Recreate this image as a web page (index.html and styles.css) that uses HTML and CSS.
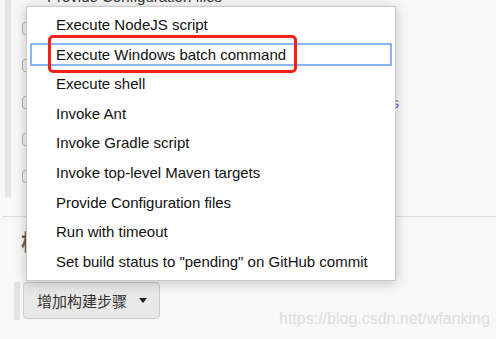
FILE: index.html
```html
<!DOCTYPE html>
<html>
<head>
<meta charset="utf-8">
<link rel="stylesheet" href="styles.css">
</head>
<body>
<div class="page">
  <div class="config">
    <div class="rail"></div>
    <div class="options">
      <div class="title">Provide Configuration files</div>
      <div class="opt"><span class="cb"></span></div>
      <div class="opt"><span class="cb"></span></div>
      <div class="opt"><span class="cb"></span><span class="link">Advanced settings</span></div>
      <div class="opt"><span class="cb"></span></div>
      <div class="opt"><span class="cb"></span></div>
    </div>
  </div>
  <div class="hr"></div>
  <div class="heading">构建</div>
  <div class="btnrow">
    <div class="bar"></div>
    <div class="btn">增加构建步骤<span class="caret"></span></div>
  </div>

  <ul class="menu">
    <li class="item">Execute NodeJS script</li>
    <li class="item focused">Execute Windows batch command</li>
    <li class="item">Execute shell</li>
    <li class="item">Invoke Ant</li>
    <li class="item">Invoke Gradle script</li>
    <li class="item">Invoke top-level Maven targets</li>
    <li class="item">Provide Configuration files</li>
    <li class="item">Run with timeout</li>
    <li class="item">Set build status to "pending" on GitHub commit</li>
  </ul>
  <div class="mark"></div>
  <div class="watermark">https://blog.csdn.net/wfanking</div>
</div>
</body>
</html>
```
FILE: styles.css
```css
* { box-sizing: border-box; }
html, body {
  margin: 0;
  padding: 0;
}
body {
  background: #f8f8f8;
  font-family: "Liberation Sans", Arial, "Noto Sans CJK SC", sans-serif;
  color: #333;
}
.page {
  position: relative;
  width: 496px;
  height: 339px;
  overflow: hidden;
}
.config {
  display: flex;
  height: 197px;
}
.rail {
  width: 6px;
  margin-left: 5px;
  background: #e6e6e6;
  flex: none;
}
.options {
  flex: 1;
  padding-left: 11px;
}
.title {
  margin-top: -12px;
  margin-left: 25px;
  font-size: 15px;
  line-height: 18px;
  color: #333;
}
.opt {
  height: 36.8px;
  display: flex;
  align-items: center;
}
.title + .opt { margin-top: 4.5px; }
.cb {
  width: 13px;
  height: 13px;
  border: 1px solid #b5b5b5;
  border-radius: 3px;
  background: #f2f2f2;
  flex: none;
}
.link {
  margin-left: auto;
  margin-right: 97px;
  font-size: 15px;
  color: #5a6fb5;
}
.hr {
  height: 1px;
  background: #dcdcdc;
  margin-top: 19px;
  margin-left: 2px;
}
.heading {
  margin-top: 7.5px;
  margin-left: 21px;
  font-family: "Noto Sans CJK SC", sans-serif;
  font-size: 22px;
  font-weight: bold;
  line-height: 30px;
  color: #6a5f55;
}
.btnrow {
  display: flex;
  margin-top: 27.5px;
}
.bar {
  width: 6px;
  height: 38px;
  margin-left: 14px;
  background: #e2e2e2;
}
.btn {
  margin-left: 3px;
  width: 137px;
  height: 37px;
  border: 1px solid #cdcdcd;
  border-radius: 4px;
  background: #e8e8e8;
  display: flex;
  align-items: center;
  padding-left: 13px;
  font-family: "Noto Sans CJK SC", sans-serif;
  font-size: 15px;
  color: #333;
}
.caret {
  margin-left: 12px;
  width: 0;
  height: 0;
  border-left: 4.5px solid transparent;
  border-right: 4.5px solid transparent;
  border-top: 5px solid #222;
}
.menu {
  position: absolute;
  left: 26px;
  top: 6px;
  width: 370px;
  height: 275px;
  margin: 0;
  padding: 3px 0;
  list-style: none;
  background: #fff;
  border: 1px solid #cacaca;
  box-shadow: 0 2px 12px rgba(0, 0, 0, 0.22);
}
.item {
  height: 29.6px;
  line-height: 29.6px;
  padding-left: 29px;
  font-size: 15px;
  color: #111;
  white-space: nowrap;
}
.item.focused {
  outline: 2px solid #8ab4f8;
  outline-offset: -5px;
}
.mark {
  position: absolute;
  left: 48px;
  top: 35px;
  width: 249px;
  height: 38px;
  border: 3.5px solid #f5201a;
  border-radius: 5px;
}
.watermark {
  position: absolute;
  left: 279px;
  top: 309px;
  font-size: 16px;
  line-height: 20px;
  color: #dedede;
  white-space: nowrap;
}
```
